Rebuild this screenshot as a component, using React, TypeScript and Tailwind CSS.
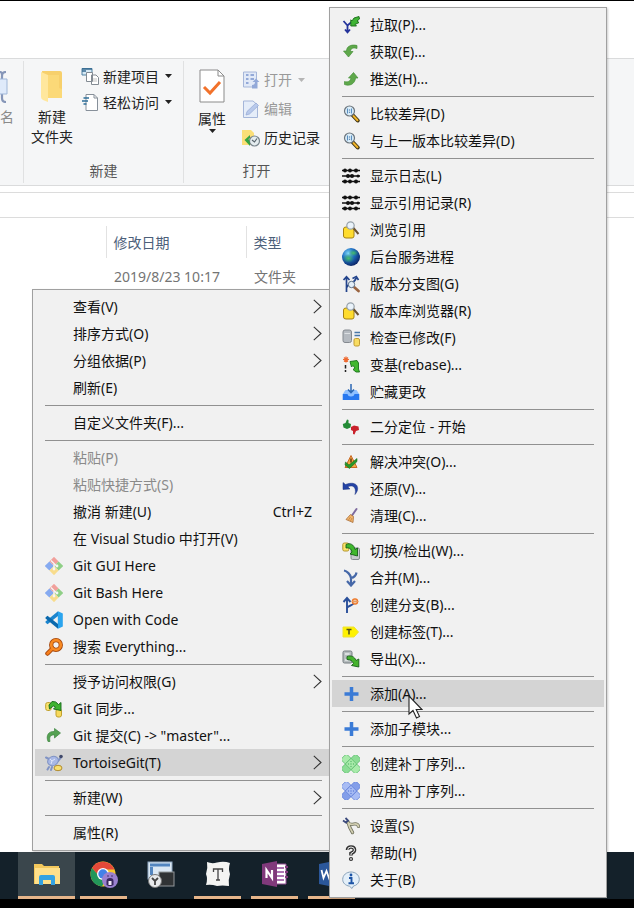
import React from "react";

const Svg = ({ children }: { children: React.ReactNode }) => (
  <svg viewBox="0 0 18 18" className="size-[18px] shrink-0" fill="none" aria-hidden="true">
    {children}
  </svg>
);

const GreenArrowDown = () => (
  <Svg>
    <path d="M15 2.500C9 1 4.500 3.500 4.500 8H1.500L6.500 14L11 8.500H8.500C8.500 5.500 11 4 15 5.500Z" fill="#5fa84b" stroke="#46913a" strokeWidth=".7" />
  </Svg>
);

const Pull = () => (
  <Svg>
    <path d="M1.500 5L5.500 9.500L9.500 6M5.500 9.500V16M3 13.500L5.500 16.300L8 13.500" stroke="#24339b" strokeWidth="1.800" />
    <path d="M17 .5L12 2L10 5L8.800 3.800V10H14.500L13 8.500L17 6.500L15 5L17.500 3Z" fill="#3fb434" stroke="#176a17" strokeWidth=".9" />
  </Svg>
);

const Push = () => (
  <Svg>
    <path d="M2.500 11.500C5 12.500 8.500 11.500 9 8H6.500L11.500 2.500L16 8H13.500C13 14 7.500 16.500 2.500 14.500Z" fill="#5fa84b" stroke="#46913a" strokeWidth=".7" />
  </Svg>
);

const Compare = () => (
  <Svg>
    <path d="M11 10.500L15.700 15.500" stroke="#3d3110" strokeWidth="4" strokeLinecap="round" />
    <path d="M11.500 11L15.500 15.300" stroke="#f0b429" strokeWidth="2" strokeLinecap="round" />
    <circle cx="7.500" cy="6" r="5" fill="#dceffa" stroke="#6c757d" strokeWidth="1.200" />
    <path d="M5.500 3.500V8.500M9.500 3.500V8.500" stroke="#5b8fc0" strokeWidth="1.100" />
    <path d="M7.500 4.500V5.500M7.500 6.800V7.800" stroke="#3c6c9d" strokeWidth="1.200" />
  </Svg>
);

const Log = () => (
  <Svg>
    <path d="M0 3.500H18M0 9H18M0 14.500H18" stroke="#111" strokeWidth="1.500" />
    <g fill="#111">
      <circle cx="3" cy="3.500" r="1.900" /><circle cx="8" cy="3.500" r="1.900" /><circle cx="14" cy="3.500" r="2" />
      <circle cx="6" cy="9" r="2" /><circle cx="10" cy="9" r="2.100" /><circle cx="16" cy="9" r="1.500" />
      <circle cx="3" cy="14.500" r="2" /><circle cx="8" cy="14.500" r="1.900" /><circle cx="14" cy="14.500" r="2" />
    </g>
  </Svg>
);

const Browse = () => (
  <Svg>
    <path d="M1.500 8Q1.500 6 4 6H10Q12 6 12 8V15Q12 17 10 17H4Q1.500 17 1.500 15Z" fill="#ffdc2e" stroke="#a58212" />
    <path d="M11 6.500L16.500 13" stroke="#6c5330" strokeWidth="2" />
    <circle cx="8.500" cy="4.500" r="3.700" fill="#eaf3fa" stroke="#98a2aa" strokeWidth="1.200" />
  </Svg>
);

const Globe = () => (
  <Svg>
    <defs>
      <radialGradient id="globeShade" cx=".35" cy=".3" r=".75">
        <stop offset="0" stopColor="#7fd8f5" /><stop offset=".45" stopColor="#1f6fc4" /><stop offset="1" stopColor="#0a2160" />
      </radialGradient>
      <radialGradient id="landShade" cx=".5" cy=".5" r=".5">
        <stop offset="0" stopColor="#46c06a" /><stop offset="1" stopColor="#2e9a58" stopOpacity="0" />
      </radialGradient>
    </defs>
    <circle cx="9" cy="9" r="9" fill="url(#globeShade)" />
    <ellipse cx="6.500" cy="10.500" rx="6" ry="4.500" fill="url(#landShade)" />
    <ellipse cx="11.500" cy="5" rx="5" ry="3.500" fill="url(#landShade)" />
  </Svg>
);

const Graph = () => (
  <Svg>
    <path d="M4.500 17V2M1.500 5L4.500 1.800L7.500 5M4.500 13C5 8 13 9 14 3M10.500 3.500L14.300 1.500L16.500 5" stroke="#23448c" strokeWidth="1.700" />
    <path d="M12 12L16.500 16" stroke="#9a6440" strokeWidth="2.700" strokeLinecap="round" />
    <circle cx="9.500" cy="9.500" r="3.200" fill="#e3eef8" stroke="#5a6f88" />
  </Svg>
);

const CheckMods = () => (
  <Svg>
    <rect x="1" y="1" width="8.500" height="12.500" rx="2" fill="#b5bac0" stroke="#84898f" />
    <path d="M2.500 4.500H8" stroke="#dde0e3" />
    <path d="M12.500 3.500H18M12.500 6.500H18" stroke="#4776a8" strokeWidth="1.400" />
    <rect x="12" y="9.500" width="5.500" height="7.500" rx="1.500" fill="#f8dc62" stroke="#c09b32" />
  </Svg>
);

const Rebase = () => (
  <Svg>
    <path d="M4 .5V6.500M1 3.500H7M2 1.500L6 5.500M6 1.500L2 5.500" stroke="#ee6a31" strokeWidth="1.200" />
    <path d="M3.500 9V12.500M3.500 14V16" stroke="#222" strokeWidth="1.500" />
    <path d="M8 5.500L15 4.500L16.500 7V13L17.500 16H14L11 13.500L13 12L11 9.500L9.500 11Z" fill="#41b82f" stroke="#17701a" strokeWidth=".9" />
  </Svg>
);

const Stash = () => (
  <Svg>
    <path d="M3.500 7L.8 11V17H17.200V11L14.500 7Z" fill="#8fc0ff" />
    <path d="M.8 11H5.500Q6 13.500 9 13.500T12.500 11H17.200V17H.8Z" fill="#2878ef" />
    <path d="M9 1V9.500M6 6.500L9 9.700L12 6.500" stroke="#2b67b4" strokeWidth="1.500" />
  </Svg>
);

const Bisect = () => (
  <Svg>
    <path d="M.8 6L3.500 5L5 1.500L6.500 2V5L9 6L8.500 9.500L5 11L1.500 9.500Z" fill="#238b36" />
    <path d="M9 9L12 7.500L16.500 8.500L17 12L14 13L12.500 16.500L11 16V13L9 12Z" fill="#c9212b" />
  </Svg>
);

const Resolve = () => (
  <Svg>
    <path d="M9 2.500L15 14.500H3Z" fill="#f3a945" stroke="#ca6a25" />
    <path d="M9 5.500V9.500" stroke="#6b3b12" strokeWidth="1.500" />
    <path d="M3.500 9L7 12L15 5.500V8.500L7.500 15.500L3 12Z" fill="#269b28" stroke="#17671a" strokeWidth=".6" />
  </Svg>
);

const Revert = () => (
  <Svg>
    <path d="M1 2.500V9.500L8 9L5.800 6.800C10 4.500 15 6.500 13 14.500C18.500 8.500 15.500 0 3.500 4.500Z" fill="#2443a5" stroke="#19317f" strokeWidth=".5" />
  </Svg>
);

const Clean = () => (
  <Svg>
    <path d="M14.500 2L10 8.500" stroke="#7e6b9f" strokeWidth="2" strokeLinecap="round" />
    <path d="M8.500 7.500L11.500 9.500L11 15.500L4 12.500Z" fill="#f2b66b" stroke="#a96d3a" strokeWidth=".8" />
    <path d="M8.500 10L6.500 13M10 11L8.500 14" stroke="#bc7b3d" strokeWidth=".7" />
  </Svg>
);

const Switch = () => (
  <Svg>
    <rect x=".8" y="1" width="6" height="8" rx="1.500" fill="#fae36a" stroke="#b3942c" />
    <rect x="9" y="6" width="8.500" height="11.500" rx="1.500" fill="#c6cbce" stroke="#848b90" />
    <path d="M4 2.500C8 .5 12 2.500 13 7.500L15.500 6V14L8 12L10 10C9 6.500 7.500 5.500 4 6Z" fill="#3fb82d" stroke="#145f17" strokeWidth=".9" />
  </Svg>
);

const Merge = () => (
  <Svg>
    <path d="M2 1.500C5 2 8.500 5.500 9 9M14.500 3.500C14 6.500 12 8.500 9 9M9 9V16.500M5 12L9 16.500L13 12" stroke="#4668a8" strokeWidth="2.200" />
  </Svg>
);

const Branch = () => (
  <Svg>
    <path d="M5 17V2M1.500 6L5 2L8.500 6M5 12C6 9.500 11 9.500 12 7" stroke="#294f9a" strokeWidth="1.900" />
    <circle cx="13" cy="5.500" r="2.500" stroke="#f0782c" strokeWidth="1.500" />
    <path d="M13 2V9M9.500 5.500H16.500" stroke="#e89b5d" />
  </Svg>
);

const Tag = () => (
  <Svg>
    <path d="M1 4H12L16.500 9L12 14H1Z" fill="#fff200" stroke="#efe232" />
    <path d="M4.500 6.500H9.500M7 6.500V11.500" stroke="#55551b" strokeWidth="1.600" />
  </Svg>
);

const Export = () => (
  <Svg>
    <rect x="1" y="1" width="9" height="12" rx="1.500" fill="#b7bdbf" stroke="#727a7e" />
    <path d="M3 4H7.500M3 10H6" stroke="#e7eaec" strokeWidth="1.500" />
    <path d="M5 6.500C9 5 12.500 6.500 14 10.500L16.800 9V17L9.500 15.500L11.500 13.500C10 10.500 8.500 9.500 5 9.500Z" fill="#45b32c" stroke="#19601a" strokeWidth=".9" />
  </Svg>
);

const Plus = () => (
  <Svg>
    <path d="M9.500 2V16M2.500 9H16.500" stroke="#3b7bd6" strokeWidth="3.500" />
  </Svg>
);

const Patch = ({ light, mid, dark }: { light: string; mid: string; dark: string }) => (
  <Svg>
    <g transform="rotate(45 9 9)" stroke={dark} strokeWidth=".7">
      <rect x="-1.500" y="5" width="21" height="8" rx="1.800" fill={light} />
      <rect x="5" y="-1.500" width="8" height="21" rx="1.800" fill={mid} />
      <rect x="5" y="5" width="8" height="8" fill={light} />
    </g>
    <g fill={dark}>
      <circle cx="9" cy="6.500" r=".7" /><circle cx="9" cy="11.500" r=".7" />
      <circle cx="6.500" cy="9" r=".7" /><circle cx="11.500" cy="9" r=".7" /><circle cx="9" cy="9" r=".7" />
    </g>
  </Svg>
);

const Settings = () => (
  <Svg>
    <path d="M5.500 5.500Q7.500 8 12 7Q16 6.500 16.500 9.500" stroke="#6f705c" strokeWidth="3.200" strokeLinecap="round" />
    <path d="M6 5Q7.500 11 10.500 15.500" stroke="#6f705c" strokeWidth="3.400" strokeLinecap="round" />
    <path d="M6 5.500Q7.500 8 12 7Q16 6.500 16.500 9.500M6 5.500Q7.500 11 10.500 15.500" stroke="#d2cfb2" strokeWidth="1.700" strokeLinecap="round" />
    <path d="M1 3.500L4 5.500L6 3.500L3.500 1" stroke="#3b4a7c" strokeWidth="1.800" />
  </Svg>
);

const Help = () => (
  <Svg>
    <path d="M5.500 6Q5.500 3 9 3T12.500 6Q12.500 8 9 9.500V11.500" stroke="#333" strokeWidth="3.600" />
    <path d="M5.800 6Q5.500 3 9 3T12.500 6Q12.500 8 9 9.500V11" stroke="#f4f4f4" strokeWidth="1" />
    <circle cx="9" cy="15" r="1.500" fill="#ddd" stroke="#333" strokeWidth="1.200" />
  </Svg>
);

const About = () => (
  <Svg>
    <path d="M9 1C13.500 1 17.300 4 17.300 8.500C17.300 12 14.500 14.500 11.500 15L10 17.500L7.500 15.200C3.500 14.500 .7 12 .7 8.500C.7 4 4.500 1 9 1Z" fill="#e3eff9" stroke="#8aa3ba" />
    <circle cx="9" cy="4" r="1.400" fill="#1e55a6" />
    <path d="M7 7H9.500V12M6.500 12.300H12" stroke="#1e55a6" strokeWidth="1.900" />
  </Svg>
);

const GitDiamond = () => (
  <Svg>
    <g transform="rotate(45 9 9)">
      <rect x="2.500" y="2.500" width="6.500" height="6.500" fill="#f1a09b" />
      <rect x="9" y="2.500" width="6.500" height="6.500" fill="#8fcf86" />
      <rect x="2.500" y="9" width="6.500" height="6.500" fill="#86aaf0" />
      <rect x="9" y="9" width="6.500" height="6.500" fill="#f8dc8c" />
    </g>
    <path d="M6 3.500L11.500 9M9 6.500V12" stroke="#f5f5f5" strokeWidth="1.300" />
    <circle cx="9" cy="12" r="1.400" fill="#f5f5f5" /><circle cx="12" cy="9" r="1.400" fill="#f5f5f5" />
  </Svg>
);

const VsCode = () => (
  <Svg>
    <path d="M13 .3L17.800 2.500V15.500L13 17.700L12.800 13V5Z" fill="#2aa4ee" />
    <path d="M13 .3V5L2.500 13.200L.5 11.500V10.500Z" fill="#1c85ce" />
    <path d="M13 17.700V13L2.500 4.800L.5 6.500V7.500Z" fill="#0b69ad" />
  </Svg>
);

const Everything = () => (
  <Svg>
    <path d="M7.500 10.500L2.500 15.500" stroke="#a5460b" strokeWidth="4.500" strokeLinecap="round" />
    <circle cx="11" cy="7" r="4.800" stroke="#a5460b" strokeWidth="4.300" />
    <path d="M7.500 10.500L2.500 15.500" stroke="#f77f1b" strokeWidth="2.600" strokeLinecap="round" />
    <circle cx="11" cy="7" r="4.800" stroke="#f88a21" strokeWidth="2.700" />
  </Svg>
);

const Sync = () => (
  <Svg>
    <rect x=".7" y="2.500" width="5.500" height="8" rx="2" fill="#f8e36d" stroke="#c0a02f" />
    <rect x="11" y="9" width="5.500" height="8" rx="2" fill="#f8d95c" stroke="#c0a02f" />
    <path d="M4 5L7 1.500Q11 .8 13.500 4.500L16 2.500V10.500L8.500 9L10.500 7Q8.500 5 7 7L4.500 9Z" fill="#3eb331" stroke="#14671a" strokeWidth=".9" />
  </Svg>
);

const Commit = () => (
  <Svg>
    <path d="M3 14.500C.5 8 4 4 9.500 4.500V1.500L15.500 6L9.500 11V8C5.500 7.500 4 10 5 14.500Z" fill="#55a152" stroke="#3d8540" strokeWidth=".7" />
  </Svg>
);

const Tortoise = () => (
  <Svg>
    <path d="M4 13L2.500 15.500M1 3.500L4 5M7 13L6 16M13 7L15.500 4" stroke="#8093c4" strokeWidth="2" strokeLinecap="round" />
    <ellipse cx="8" cy="7" rx="5.500" ry="4.500" transform="rotate(-25 8 7)" fill="#a8b8e6" stroke="#8093c4" />
    <path d="M5 5L7 7L6 10M7 7L10 5" stroke="#dde5fa" />
    <circle cx="16" cy="2.500" r="1.800" fill="#40496a" />
    <ellipse cx="13" cy="14" rx="4" ry="2.700" fill="#f8df70" stroke="#b18c30" />
  </Svg>
);

type Entry =
  | { label: string; icon?: React.ReactNode; shortcut?: string; sub?: boolean; active?: boolean; disabled?: boolean }
  | null;

const folderMenu: Entry[] = [
  { label: "查看(V)", sub: true },
  { label: "排序方式(O)", sub: true },
  { label: "分组依据(P)", sub: true },
  { label: "刷新(E)" },
  null,
  { label: "自定义文件夹(F)..." },
  null,
  { label: "粘贴(P)", disabled: true },
  { label: "粘贴快捷方式(S)", disabled: true },
  { label: "撤消 新建(U)", shortcut: "Ctrl+Z" },
  { label: "在 Visual Studio 中打开(V)" },
  { label: "Git GUI Here", icon: <GitDiamond /> },
  { label: "Git Bash Here", icon: <GitDiamond /> },
  { label: "Open with Code", icon: <VsCode /> },
  { label: "搜索 Everything...", icon: <Everything /> },
  null,
  { label: "授予访问权限(G)", sub: true },
  { label: "Git 同步...", icon: <Sync /> },
  { label: 'Git 提交(C) -> "master"...', icon: <Commit /> },
  { label: "TortoiseGit(T)", icon: <Tortoise />, sub: true, active: true },
  null,
  { label: "新建(W)", sub: true },
  null,
  { label: "属性(R)" },
];

const tortoiseMenu: Entry[] = [
  { label: "拉取(P)...", icon: <Pull /> },
  { label: "获取(E)...", icon: <GreenArrowDown /> },
  { label: "推送(H)...", icon: <Push /> },
  null,
  { label: "比较差异(D)", icon: <Compare /> },
  { label: "与上一版本比较差异(D)", icon: <Compare /> },
  null,
  { label: "显示日志(L)", icon: <Log /> },
  { label: "显示引用记录(R)", icon: <Log /> },
  { label: "浏览引用", icon: <Browse /> },
  { label: "后台服务进程", icon: <Globe /> },
  { label: "版本分支图(G)", icon: <Graph /> },
  { label: "版本库浏览器(R)", icon: <Browse /> },
  { label: "检查已修改(F)", icon: <CheckMods /> },
  { label: "变基(rebase)...", icon: <Rebase /> },
  { label: "贮藏更改", icon: <Stash /> },
  null,
  { label: "二分定位 - 开始", icon: <Bisect /> },
  null,
  { label: "解决冲突(O)...", icon: <Resolve /> },
  { label: "还原(V)...", icon: <Revert /> },
  { label: "清理(C)...", icon: <Clean /> },
  null,
  { label: "切换/检出(W)...", icon: <Switch /> },
  { label: "合并(M)...", icon: <Merge /> },
  { label: "创建分支(B)...", icon: <Branch /> },
  { label: "创建标签(T)...", icon: <Tag /> },
  { label: "导出(X)...", icon: <Export /> },
  null,
  { label: "添加(A)...", icon: <Plus />, active: true },
  null,
  { label: "添加子模块...", icon: <Plus /> },
  null,
  { label: "创建补丁序列...", icon: <Patch light="#a9ebab" mid="#8cdd95" dark="#55b868" /> },
  { label: "应用补丁序列...", icon: <Patch light="#a8bcf4" mid="#839ee9" dark="#5b7bd6" /> },
  null,
  { label: "设置(S)", icon: <Settings /> },
  { label: "帮助(H)", icon: <Help /> },
  { label: "关于(B)", icon: <About /> },
];

function Menu({ entries, label }: { entries: Entry[]; label: string }) {
  return (
    <div role="menu" aria-label={label} className="flex flex-col border border-[#a0a0a0] bg-[#f1f1f1] px-0.5 pt-[3px] pb-1 shadow-[1px_1px_2px_rgba(0,0,0,0.2)]">
      {entries.map((e, i) =>
        e === null ? (
          <div key={i} role="separator" className="flex h-2 items-end px-2.5 pb-[3px]">
            <div className="h-px w-full bg-[#919191]" />
          </div>
        ) : (
          <button
            key={i}
            type="button"
            role="menuitem"
            disabled={e.disabled}
            className={`flex h-[27px] items-center gap-2.5 px-2.5 text-left ${e.active ? "bg-[#d4d4d4]" : ""} ${e.disabled ? "text-[#8a8a8a]" : "text-[#111]"}`}
          >
            {e.icon ?? <span className="size-[18px] shrink-0" />}
            <span className="flex-1 whitespace-nowrap">{e.label}</span>
            {e.shortcut && <span className="pr-2.5">{e.shortcut}</span>}
            {e.sub && (
              <svg viewBox="0 0 9 15" className="h-[15px] w-[9px]" fill="none" aria-hidden="true">
                <path d="M.8 .8L8 7.500L.8 14.200" stroke="#333" strokeWidth="1.100" />
              </svg>
            )}
          </button>
        ),
      )}
    </div>
  );
}

const Caret = ({ faded }: { faded?: boolean }) => (
  <svg viewBox="0 0 7 4" className={`h-1 w-[7px] ${faded ? "fill-[#b5b5b5]" : "fill-[#222]"}`} aria-hidden="true">
    <path d="M0 0H7L3.500 4Z" />
  </svg>
);

function Ribbon() {
  return (
    <div className="flex h-32 shrink-0 border-y border-[#dadbdc] bg-[#f5f6f7] text-[#222]">
      <div className="flex w-[23px] flex-col items-start">
        <svg viewBox="0 0 9 32" className="mt-3 h-8 w-[9px]" fill="none" aria-hidden="true">
          <path d="M6 1Q2 1 2 5V27Q2 31 6 31M0 1Q2 1 2 4" stroke="#8696b8" strokeWidth="2.200" />
          <path d="M0 8H7V23H0" fill="#dfeafa" stroke="#9fb6d8" />
        </svg>
        <span className="mt-1 leading-5 text-[#8a8a8a]">名</span>
      </div>
      <section className="my-0.5 flex w-40 flex-col border-l border-[#e0e1e2]" aria-label="新建">
        <div className="flex flex-1 pl-[7px]">
          <button type="button" className="flex w-[42px] flex-col items-center pt-2 leading-5">
            <svg viewBox="0 0 24 34" className="mb-1 h-[34px] w-6" aria-hidden="true">
              <path d="M2 2H20Q22 2 22 4V29H4Z" fill="#f7d06c" />
              <path d="M1 3L8 6V33L3 31Q1 30 1 28Z" fill="#ffe79d" />
              <path d="M8 6H19V19L22 20V29H8Z" fill="#fbd978" />
            </svg>
            <span>新建</span>
            <span className="whitespace-nowrap">文件夹</span>
          </button>
          <div className="ml-2 flex flex-col pt-0.5">
            <button type="button" className="flex h-[26px] items-center gap-1 whitespace-nowrap">
              <Svg>
                <path d="M1 1.500H11V8H1Z" fill="#d6e9f5" stroke="#4f80a2" />
                <path d="M1 2H11M1 4H5" stroke="#376b91" strokeWidth="1.400" />
                <path d="M5.500 5.500H11.500V14.500H5.500ZM10.500 8H15L17.500 10.500V17.500H10.500Z" fill="#fff" stroke="#838b93" />
                <path d="M12 12H16M12 14H16" stroke="#aaa" strokeWidth=".7" />
              </Svg>
              <span>新建项目</span>
              <span className="pl-0.5"><Caret /></span>
            </button>
            <button type="button" className="flex h-[26px] items-center gap-1 whitespace-nowrap">
              <Svg>
                <path d="M5 1.500H13L16.500 5V17.500H5Z" fill="#fff" stroke="#87909a" />
                <path d="M13 1.500V5H16.500" stroke="#87909a" />
                <path d="M2.500 5H8M1 8H7M2.500 11H5.500" stroke="#2e6f99" strokeWidth="1.600" />
              </Svg>
              <span>轻松访问</span>
              <span className="pl-0.5"><Caret /></span>
            </button>
          </div>
        </div>
        <div className="h-[22px] text-center leading-5 text-[#555]">新建</div>
      </section>
      <section className="my-0.5 flex w-[146px] flex-col border-l border-[#e0e1e2]" aria-label="打开">
        <div className="flex flex-1 pl-[14px]">
          <button type="button" className="flex w-7 flex-col items-center pt-2 leading-5">
            <svg viewBox="0 0 26 34" className="mb-1.5 h-[34px] w-[26px]" fill="none" aria-hidden="true">
              <path d="M1 1H19L25 7V33H1Z" fill="#fff" stroke="#8b8b8b" />
              <path d="M19 1V7H25" stroke="#8b8b8b" />
              <path d="M5 18L11 24L21 13" stroke="#f2722b" strokeWidth="3" />
            </svg>
            <span>属性</span>
            <Caret />
          </button>
          <div className="ml-4 flex flex-col pt-1">
            <button type="button" disabled className="flex h-[29px] items-center gap-1 whitespace-nowrap text-[#999]">
              <Svg>
                <path d="M1.500 1H14.500V16H1.500Z" fill="#e1e9f7" stroke="#a5b6d9" />
                <path d="M4 4H6.500M4 8H6.500M4 12H6.500M8.500 4H12M8.500 8H12" stroke="#93a9d8" strokeWidth="1.800" />
                <path d="M10 17.500V14Q13 14 13 11H10.500L14 7.500L17.500 11H15.500V17.500Z" fill="#93a9d8" />
              </Svg>
              <span>打开</span>
              <span className="pl-0.5"><Caret faded /></span>
            </button>
            <button type="button" disabled className="flex h-[29px] items-center gap-1 whitespace-nowrap text-[#999]">
              <Svg>
                <path d="M1.500 1H11L15.500 5V17.500H1.500Z" fill="#e5edf9" stroke="#a5b6d9" />
                <path d="M4 15L5 11.500L14 3L16.500 5.500L7.500 14Z" fill="#b8c9eb" stroke="#93a7d4" strokeWidth=".7" />
              </Svg>
              <span>编辑</span>
            </button>
            <button type="button" className="flex h-[29px] items-center gap-1 whitespace-nowrap">
              <Svg>
                <path d="M0 1H9L12 4V16H0Z" fill="#fbdf78" />
                <circle cx="12.500" cy="12" r="5" fill="#e4ecef" stroke="#78858c" strokeWidth="1.200" />
                <path d="M10 11L12.500 13L15 9.500" stroke="#58656d" strokeWidth="1.200" />
                <path d="M8 6L2.500 11L8 17V13.500L6.500 10L8 9Z" fill="#35a343" />
              </Svg>
              <span>历史记录</span>
            </button>
          </div>
        </div>
        <div className="h-[22px] text-center leading-5 text-[#555]">打开</div>
      </section>
    </div>
  );
}

const TaskIcon = ({ children }: { children: React.ReactNode }) => (
  <svg viewBox="0 0 28 28" className="size-7" fill="none" aria-hidden="true">
    {children}
  </svg>
);

function Task({ name, open, active, children }: { name: string; open?: boolean; active?: boolean; children: React.ReactNode }) {
  return (
    <button type="button" aria-label={name} className={`flex w-[57px] flex-col items-center ${active ? "bg-[#3a464c]" : ""}`}>
      <span className="flex flex-1 items-center">{children}</span>
      <span className={`h-[3px] ${active ? "w-full" : "w-[47px]"} ${open ? "bg-[#e6b58a]" : ""}`} />
    </button>
  );
}

function Taskbar() {
  return (
    <nav aria-label="任务栏" className="flex h-[47px] shrink-0 overflow-hidden bg-[#14212a] pl-[18px]">
      <Task name="文件资源管理器" open active>
        <TaskIcon>
          <path d="M1 4H9L11 6H26V24H1Z" fill="#f3c85c" />
          <path d="M2 8H27V24H2Z" fill="#ffe08a" />
          <path d="M6 17Q6 15 8 15H20Q22 15 22 17V25H18V20H10V25H6Z" fill="#34a2e2" />
        </TaskIcon>
      </Task>
      <Task name="Chrome" open>
        <TaskIcon>
          <circle cx="13" cy="14" r="12.500" fill="#f6c72c" />
          <path d="M2 8A12.500 12.500 0 0 1 24.500 9.500H13L9 16Z" fill="#e5493a" />
          <path d="M2 8A12.500 12.500 0 0 0 12 26.500L17 17L9 16Z" fill="#23965a" />
          <circle cx="13" cy="14" r="6" fill="#fff" />
          <circle cx="13" cy="14" r="4.700" fill="#4382e8" />
          <circle cx="20" cy="20" r="8" fill="#9a80cf" />
          <path d="M16.500 25V21Q16.500 18 20 18T23.500 21V25L21.500 26H18.500Z" fill="#39275e" />
          <path d="M18.500 21H21.500V25H18.500Z" fill="#f1e9f6" />
          <circle cx="18" cy="16" r=".8" fill="#39275e" /><circle cx="22" cy="16" r=".8" fill="#39275e" />
        </TaskIcon>
      </Task>
      <Task name="远程控制">
        <TaskIcon>
          <rect x="1" y="2" width="24" height="17" fill="#dbe8f4" stroke="#8fa8c1" />
          <path d="M3 5H23M4.500 7V15" stroke="#5386c0" strokeWidth="3" />
          <rect x="12" y="12" width="15" height="14" fill="#303335" stroke="#92979a" />
          <circle cx="8" cy="21" r="6.500" fill="#e7eaec" stroke="#777" />
          <path d="M5 18L8 21L11 18M8 21V25" stroke="#444" strokeWidth="1.800" />
        </TaskIcon>
      </Task>
      <Task name="Typora" open>
        <TaskIcon>
          <path d="M3 2Q8 4 13 2.500Q20 1 26 3Q24 9 26 14Q24 20 25 26Q18 25 13 26Q7 24 2 25Q4 19 2 14Q4 8 3 2Z" fill="#f4f4f2" />
          <path d="M9.500 12V9H18.500V12M14 9V20M12 20H16" stroke="#444" strokeWidth="1.300" />
        </TaskIcon>
      </Task>
      <Task name="OneNote" open>
        <TaskIcon>
          <path d="M14 4H25V24H14Z" fill="#fff" stroke="#8f4a91" />
          <path d="M16 8H23M16 12H23M16 16H23M16 20H23" stroke="#92489a" strokeWidth="1.500" />
          <path d="M24 7H27M24 12H27M24 17H27" stroke="#80397b" strokeWidth="2" />
          <path d="M1 4L16 1V27L1 24Z" fill="#80397b" />
          <path d="M5.500 18V10L11 18V10" stroke="#fff" strokeWidth="2.200" />
        </TaskIcon>
      </Task>
      <Task name="Word" open>
        <TaskIcon>
          <path d="M14 4H26V24H14Z" fill="#fff" stroke="#2b579a" />
          <path d="M1 4L16 1V27L1 24Z" fill="#2b579a" />
          <path d="M3.500 10L5.500 18L8.500 11L11 18L13.500 10" stroke="#fff" strokeWidth="1.800" />
        </TaskIcon>
      </Task>
    </nav>
  );
}

export default function App() {
  return (
    <div className="relative flex min-h-screen flex-col overflow-hidden bg-white font-['Noto_Sans','Noto_Sans_CJK_SC',sans-serif] text-[14px]">
      <div className="h-[58px] shrink-0 border-t border-black" />
      <Ribbon />
      <div className="h-[6px] shrink-0" />
      <div className="h-[26px] shrink-0 border-y border-[#dcdcdc]" />
      <main className="flex-1 pt-2">
        <table className="w-full table-fixed text-left">
          <thead>
            <tr className="h-8 text-[#4c607a]">
              <td className="w-[106px]" />
              <th scope="col" className="w-[140px] border-l border-[#e2e2e2] pl-[7px] font-normal">修改日期</th>
              <th scope="col" className="border-l border-[#e2e2e2] pl-[7px] font-normal">类型</th>
            </tr>
          </thead>
          <tbody>
            <tr className="h-9 text-[#747474]">
              <td />
              <td className="whitespace-nowrap pl-2">2019/8/23 10:17</td>
              <td className="pl-2">文件夹</td>
            </tr>
          </tbody>
        </table>
      </main>
      <Taskbar />
      <div className="h-[9px] shrink-0 bg-black" />

      <div className="absolute top-[289px] left-8 w-[303px]">
        <Menu entries={folderMenu} label="文件夹菜单" />
      </div>
      <div className="absolute top-[7px] left-[329px] w-[278px]">
        <Menu entries={tortoiseMenu} label="TortoiseGit" />
      </div>
      <svg viewBox="0 0 15 24" className="pointer-events-none absolute top-[695px] left-[408px] h-6 w-[15px]" aria-hidden="true">
        <path d="M1 1V19L5 15.500L8.500 23L11.500 21.500L8.200 14.500H14Z" fill="#fff" stroke="#222" strokeWidth="1.100" />
      </svg>
    </div>
  );
}
